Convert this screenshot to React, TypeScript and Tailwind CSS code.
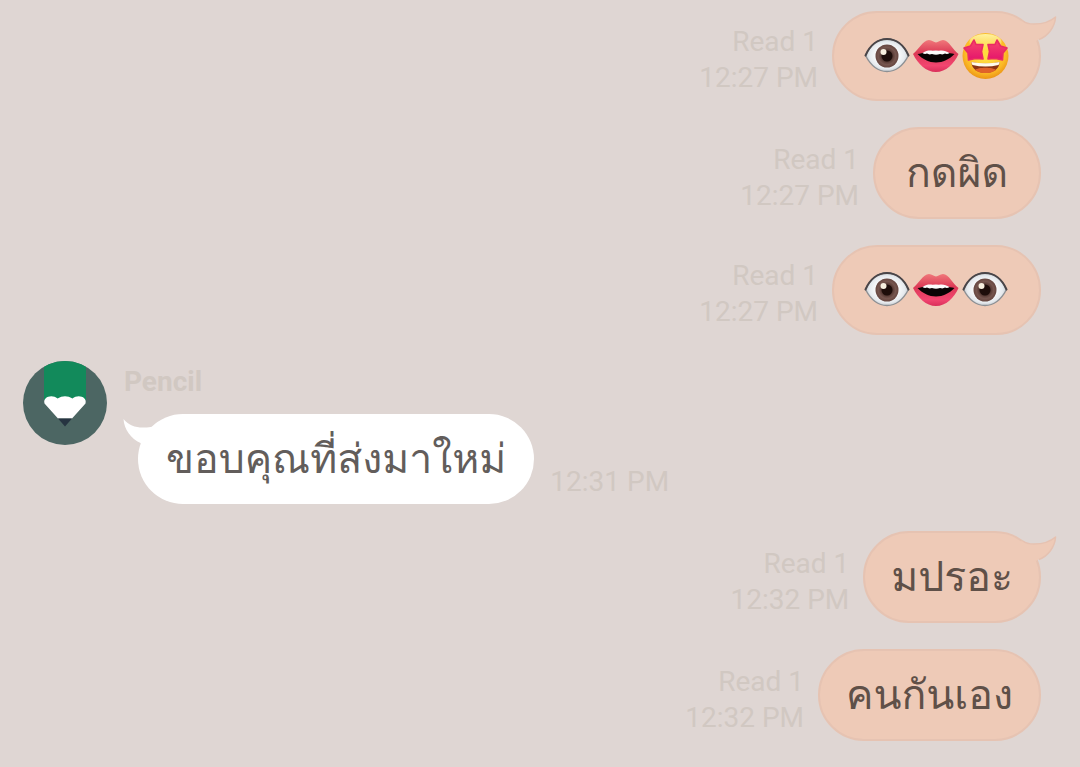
import type { ReactNode } from 'react';

type Emoji = 'eye' | 'mouth' | 'star';

interface Message {
  id: number;
  mine: boolean;
  time: string;
  text?: string;
  emojis?: Emoji[];
  tail?: boolean;
  read?: number;
}

const messages: Message[] = [
  { id: 1, mine: true, time: '12:27 PM', emojis: ['eye', 'mouth', 'star'], tail: true, read: 1 },
  { id: 2, mine: true, time: '12:27 PM', text: 'กดผิด', read: 1 },
  { id: 3, mine: true, time: '12:27 PM', emojis: ['eye', 'mouth', 'eye'], read: 1 },
  { id: 4, mine: false, time: '12:31 PM', text: 'ขอบคุณที่ส่งมาใหม่', tail: true },
  { id: 5, mine: true, time: '12:32 PM', text: 'มปรอะ', tail: true, read: 1 },
  { id: 6, mine: true, time: '12:32 PM', text: 'คนกันเอง', read: 1 },
];

// Shared gradients, referenced by id from every emoji
function EmojiDefs() {
  return (
    <svg className="absolute h-0 w-0" aria-hidden="true">
      <defs>
        <radialGradient id="eyeWhite" cx="50%" cy="50%" r="55%">
          <stop offset="0.4" stopColor="#ffffff" />
          <stop offset="0.75" stopColor="#e6eaee" />
          <stop offset="1" stopColor="#b4babf" />
        </radialGradient>
        <radialGradient id="iris">
          <stop offset="0.4" stopColor="#4a2f2a" />
          <stop offset="0.75" stopColor="#76564f" />
          <stop offset="1" stopColor="#664640" />
        </radialGradient>
        <linearGradient id="lips" x1="0" y1="0" x2="0" y2="1">
          <stop offset="0" stopColor="#f0787a" />
          <stop offset="0.4" stopColor="#dc3a56" />
          <stop offset="0.8" stopColor="#f24570" />
          <stop offset="1" stopColor="#d92f5a" />
        </linearGradient>
        <radialGradient id="face" cx="50%" cy="42%" r="60%">
          <stop offset="0.3" stopColor="#ffdc3f" />
          <stop offset="0.75" stopColor="#fbb926" />
          <stop offset="1" stopColor="#e98f14" />
        </radialGradient>
        <linearGradient id="shine" x1="0" y1="0" x2="0" y2="1">
          <stop offset="0" stopColor="#fff3a0" />
          <stop offset="1" stopColor="#fff3a0" stopOpacity="0" />
        </linearGradient>
        <linearGradient id="starPink" x1="0" y1="0" x2="0" y2="1">
          <stop offset="0" stopColor="#f8486c" />
          <stop offset="1" stopColor="#e4146c" />
        </linearGradient>
      </defs>
    </svg>
  );
}

function EyeEmoji() {
  return (
    <svg viewBox="0 0 49 48" className="h-12 w-[49px]" role="img" aria-label="eye">
      <path d="M2.500 23.500C7 13 15 7 24 7S41 13 45.500 23.500C40 34 33 39.500 24 39.500S8 34 2.500 23.500Z" fill="url(#eyeWhite)" stroke="#8d9094" strokeWidth="1.400" />
      <path d="M2.500 23.500C7 13 15 7 24 7S41 13 45.500 23.500" fill="none" stroke="#4a4548" strokeWidth="2" strokeLinecap="round" />
      <circle cx="24" cy="24" r="11.500" fill="url(#iris)" />
      <circle cx="24" cy="24" r="5.500" fill="#1d0d0a" />
      <circle cx="20.500" cy="20" r="3" fill="#f7efdf" />
    </svg>
  );
}

function MouthEmoji() {
  return (
    <svg viewBox="0 0 49 48" className="h-12 w-[49px]" role="img" aria-label="mouth">
      <path d="M1 22C6 18 11 8.500 17 8C20 8 22 10.500 24 10.500S28 8 31 8C37 8.500 41 18 46.500 22C42 32 34 40 24 40S6 32 1 22Z" fill="url(#lips)" />
      <path d="M5.500 22C12 21 15 18.500 24 19S36 21 42.500 22C37 27.500 31 30.500 24 30.500S11 27.500 5.500 22Z" fill="#090304" />
      <path d="M10.500 21C15 18 18 18.200 20.500 18.800Q24 18 27 18.800C31 18 34 19 37.500 21Q35.500 22.500 33 21.600Q31 23 28 22Q24 23.500 20 22Q17 23 15 21.600Q12.500 22.500 10.500 21Z" fill="#fbfbfb" />
    </svg>
  );
}

function StarEmoji() {
  return (
    <svg viewBox="0 0 49 48" className="h-12 w-[49px]" role="img" aria-label="star-struck face">
      <circle cx="24.500" cy="24" r="23" fill="url(#face)" />
      <ellipse cx="24.500" cy="10" rx="16" ry="8" fill="url(#shine)" />
      <path d="M13 8L15 12.500L22 12.500L20.500 19.500L22 27L14.500 26.500L7.500 28L7 21L3 16L9.500 14Z" fill="url(#starPink)" stroke="#ea2b64" strokeWidth="1.600" strokeLinejoin="round" />
      <path d="M36 8L39.500 14L46 16L42 21L41.500 28L34.500 26.500L27 27L28.500 19.500L27 12.500L34 12.500Z" fill="url(#starPink)" stroke="#ea2b64" strokeWidth="1.600" strokeLinejoin="round" />
      <path d="M10.500 30Q24.500 33 38.500 30C38.500 37 32 41 24.500 41S10.500 37 10.500 30Z" fill="#8a3413" />
      <path d="M14 38C17 35 32 35 35 38C32 40.500 28 41 24.500 41S17 40.500 14 38Z" fill="#e0622a" />
      <path d="M10.500 30Q24.500 32.500 38.500 30Q38.500 32 37.500 33Q24.500 36 11.500 33Q10.500 32 10.500 30Z" fill="#fffbea" />
    </svg>
  );
}

const emojiMap: Record<Emoji, () => ReactNode> = {
  eye: EyeEmoji,
  mouth: MouthEmoji,
  star: StarEmoji,
};

function Avatar() {
  return (
    <svg viewBox="0 0 84 84" className="h-[84px] w-[84px] shrink-0" role="img" aria-label="Pencil avatar">
      <clipPath id="avatarClip">
        <circle cx="42" cy="42" r="42" />
      </clipPath>
      <g clipPath="url(#avatarClip)">
        <rect width="84" height="84" fill="#4c6663" />
        <rect x="21" width="42" height="39" fill="#128a5b" />
        <path d="M21.500 42.500C19.500 36 29 33 34.500 37.500Q42 33 49.500 37.500C55 33 64.500 36 62.500 42.500L49 57.500H35Z" fill="#ffffff" />
        <path d="M35 57.500H49L42 65.500Z" fill="#263441" />
      </g>
    </svg>
  );
}

function Tail({ mine }: { mine: boolean }) {
  if (mine) {
    return (
      <svg viewBox="0 0 40 32" className="absolute -right-[18px] top-0.5 h-8 w-10" aria-hidden="true">
        <path d="M4 5.500C9 8.500 12 9 17 9C27 9 34 6 38.500 2C38 12 31 21 21.500 24.500L19 26L9 20Z" fill="#eecab7" />
        <path d="M6 6C9 8.500 12 9 17 9C27 9 34 6 38.500 2C38 12 31 21 22 24.500" fill="none" stroke="#e6c2b1" strokeWidth="1.500" strokeLinejoin="round" />
      </svg>
    );
  }
  return (
    <svg viewBox="0 0 40 32" className="absolute -left-4 top-0.5 h-8 w-10" aria-hidden="true">
      <path d="M36 9C32 11 26 11.500 21 11.500C13 11.500 6 9 1.500 3C2 13 9 23 18.500 27L20 30L30 24Z" fill="#ffffff" />
    </svg>
  );
}

function Bubble({ message }: { message: Message }) {
  const { mine, text, emojis, tail } = message;
  return (
    <div
      className={
        mine
          ? 'relative min-w-[168px] rounded-[46px] border-2 border-[#e6c3b2] bg-[#eecab7] px-[26px] text-center text-[#5f5048]'
          : 'relative rounded-[46px] bg-white px-7 text-[#625d5b]'
      }
    >
      {tail && <Tail mine={mine} />}
      {emojis ? (
        <div className="flex px-[3px] py-[19px]">
          {emojis.map((name, i) => {
            const Icon = emojiMap[name];
            return <Icon key={i} />;
          })}
        </div>
      ) : (
        <p className={mine ? 'whitespace-nowrap py-3 text-[41px] leading-[64px]' : 'whitespace-nowrap py-[13px] text-[41px] leading-[64px]'}>{text}</p>
      )}
    </div>
  );
}

function Meta({ message }: { message: Message }) {
  return (
    <div className={message.mine ? 'pb-[5px] text-right' : 'pb-1'}>
      {message.read && <div>Read {message.read}</div>}
      <time className="block">{message.time}</time>
    </div>
  );
}

export default function App() {
  return (
    <main className="min-h-screen bg-[#dfd6d3] pb-[26px] pl-[23px] pr-[39px] pt-[11px] font-[Roboto,Loma,sans-serif] text-[28px] leading-9 text-[#d1c8c2]">
      <EmojiDefs />
      <ol className="flex flex-col gap-[26px]">
        {messages.map((m) =>
          m.mine ? (
            <li key={m.id} className="flex items-end justify-end gap-3.5">
              <Meta message={m} />
              <Bubble message={m} />
            </li>
          ) : (
            <li key={m.id} className="flex items-start gap-[17px] pb-px">
              <Avatar />
              <div>
                <h2 className="mb-[11px] font-bold leading-[42px]">Pencil</h2>
                <div className="flex items-end gap-4 pl-3.5">
                  <Bubble message={m} />
                  <Meta message={m} />
                </div>
              </div>
            </li>
          )
        )}
      </ol>
    </main>
  );
}
